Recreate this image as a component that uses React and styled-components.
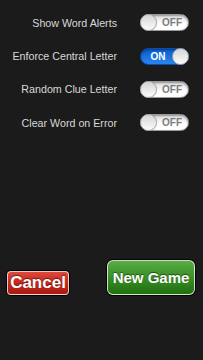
import React from "react";
import styled, { createGlobalStyle } from "styled-components";

const Global = createGlobalStyle`
html, body {
margin: 0;
padding: 0;
background: #1b1b1b;
}
`;

class App extends React.Component {
    constructor(props) {
        super(props);

        this.state = {
            options: [
                { label: "Show Word Alerts", on: false },
                { label: "Enforce Central Letter", on: true },
                { label: "Random Clue Letter", on: false },
                { label: "Clear Word on Error", on: false }
            ]
        };
    }

    toggle = (i) => {
        const options = this.state.options.map((o, j) => (j === i ? { ...o, on: !o.on } : o));
        this.setState({ options });
    };

    render() {
        return (
            <Page>
                <Global />
                <Settings>
                    {this.state.options.map((o, i) => (
                        <Row key={o.label}>
                            <Label>{o.label}</Label>
                            <Switch on={o.on} onClick={() => this.toggle(i)}>
                                <SwitchText on={o.on}>{o.on ? "ON" : "OFF"}</SwitchText>
                                <Knob />
                            </Switch>
                        </Row>
                    ))}
                </Settings>

                <Footer>
                    <Button $kind="cancel">Cancel</Button>
                    <Button $kind="go">New Game</Button>
                </Footer>
            </Page>
        );
    }
}

const Page = styled.div`
height: 360px;
display: flex;
flex-direction: column;
background: #1b1b1b;
font-family: "Liberation Sans", Arial, sans-serif;
`;

const Settings = styled.div`
padding-top: 6px;
display: flex;
flex-direction: column;
`;

const Row = styled.div`
height: 33.4px;
display: grid;
grid-template-columns: 117px 49px;
column-gap: 23px;
align-items: center;
`;

const Label = styled.div`
text-align: right;
color: #d8d8d8;
font-size: 10.7px;
white-space: nowrap;
`;

const Switch = styled.div`
position: relative;
box-sizing: border-box;
width: 49px;
height: 17px;
border-radius: 9px;
display: flex;
align-items: center;
flex-direction: ${(p) => (p.on ? "row" : "row-reverse")};
background: ${(p) =>
    p.on
        ? "linear-gradient(#0a5ccc, #2a86f2)"
        : "linear-gradient(#dcdcdc, #ffffff 60%)"};
box-shadow: inset 0 1px 2px rgba(0, 0, 0, 0.35);
border: 1px solid ${(p) => (p.on ? "#0a4fae" : "#9a9a9a")};
cursor: pointer;
`;

const SwitchText = styled.span`
flex: 1;
text-align: center;
font-size: 10px;
font-weight: bold;
color: ${(p) => (p.on ? "#fff" : "#7c7c7c")};
padding-left: ${(p) => (p.on ? "2px" : "0")};
`;

const Knob = styled.span`
box-sizing: border-box;
width: 17px;
height: 17px;
margin: -1px;
border-radius: 50%;
background: linear-gradient(#d6d6d6, #fbfbfb);
border: 1px solid #a8a8a8;
box-shadow: 0 0 1px rgba(0, 0, 0, 0.3);
`;

const Footer = styled.div`
margin-top: auto;
padding: 0 8px 65px 7px;
display: flex;
justify-content: space-between;
align-items: flex-end;
`;

const Button = styled.button`
box-sizing: border-box;
font-family: "Liberation Sans", Arial, sans-serif;
font-weight: bold;
color: #fff;
padding: 0;
border: 1px solid rgba(255, 255, 255, 0.75);
box-shadow: 0 0 0 1px #000;
text-shadow: 0 -1px 1px rgba(0, 0, 0, 0.5);
cursor: pointer;
width: ${(p) => (p.$kind === "cancel" ? "62px" : "88px")};
height: ${(p) => (p.$kind === "cancel" ? "24px" : "35px")};
font-size: ${(p) => (p.$kind === "cancel" ? "17px" : "15px")};
border-radius: ${(p) => (p.$kind === "cancel" ? "4px" : "6px")};
background: ${(p) =>
    p.$kind === "cancel"
        ? "linear-gradient(#e0483c, #c42a1e 50%, #a8190f)"
        : "linear-gradient(#5aac45, #3a8f26 50%, #1f6f10)"};
`;

export default App;
